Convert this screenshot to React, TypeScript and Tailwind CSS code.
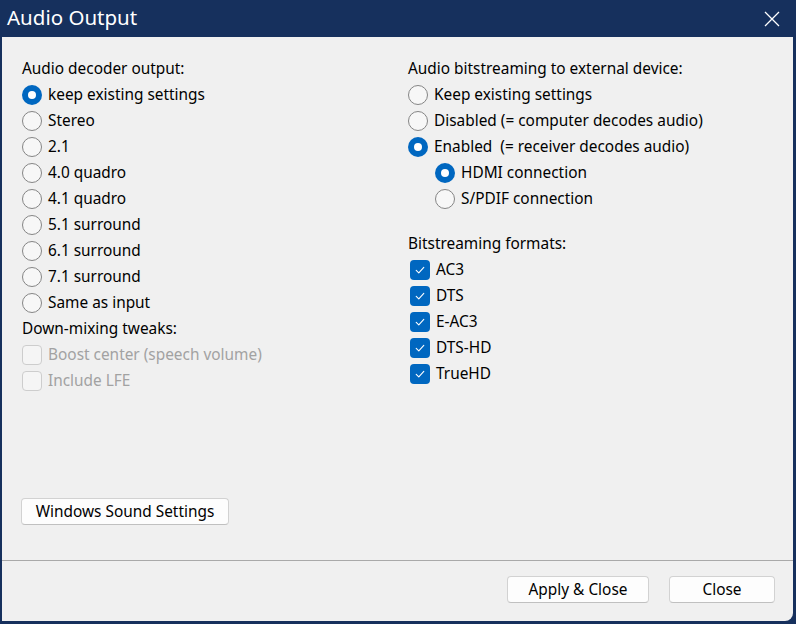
import React, { useState } from 'react';

const FONT = { fontFamily: '"Noto Sans", "Open Sans", Arial, sans-serif' };

const Radio: React.FC<{ checked: boolean; label: string; onClick: () => void }> = ({ checked, label, onClick }) => (
  <div className="flex h-[26px] items-center cursor-default" onClick={onClick}>
    {checked ? (
      <span className="flex h-[20px] w-[20px] items-center justify-center rounded-full bg-[#0067c0]">
        <span className="h-[8px] w-[8px] rounded-full bg-white" />
      </span>
    ) : (
      <span className="h-[20px] w-[20px] rounded-full border border-[#858585] bg-[#f7f7f7]" />
    )}
    <span className="ml-[6px] whitespace-pre pb-[1px] text-[15.4px] text-black">{label}</span>
  </div>
);

const Check: React.FC<{ checked: boolean; label: string; disabled?: boolean; onClick?: () => void }> = ({
  checked,
  label,
  disabled,
  onClick,
}) => (
  <div className="flex h-[26px] items-center cursor-default" onClick={disabled ? undefined : onClick}>
    {checked ? (
      <span className="flex h-[20px] w-[20px] items-center justify-center rounded-[4px] bg-[#0067c0]">
        <svg width="12" height="12" viewBox="0 0 12 12" fill="none">
          <path d="M2.2 6.3 L4.8 8.8 L9.8 3.4" stroke="white" strokeWidth="1.1" strokeLinecap="round" strokeLinejoin="round" />
        </svg>
      </span>
    ) : (
      <span
        className={
          disabled
            ? 'h-[20px] w-[20px] rounded-[4px] border border-[#cdcdcd] bg-[#f5f5f5]'
            : 'h-[20px] w-[20px] rounded-[4px] border border-[#858585] bg-[#f7f7f7]'
        }
      />
    )}
    <span
      className={
        disabled
          ? 'ml-[6px] pb-[1px] text-[15.4px] text-[#a2a2a2]'
          : 'ml-[6px] pb-[1px] text-[15.4px] text-black'
      }
    >
      {label}
    </span>
  </div>
);

const Heading: React.FC<{ label: string; className?: string }> = ({ label, className }) => (
  <div className={'flex h-[26px] items-center pb-[1px] text-[15.4px] text-black ' + (className || '')}>{label}</div>
);

const Button: React.FC<{ label: string; className?: string }> = ({ label, className }) => (
  <button
    className={
      'flex h-[27px] items-center justify-center rounded-[4px] border border-[#d2d2d2] border-b-[#c0c0c0] bg-[#fdfdfd] text-[15.4px] text-black ' +
      (className || '')
    }
  >
    {label}
  </button>
);

const channels = [
  'keep existing settings',
  'Stereo',
  '2.1',
  '4.0 quadro',
  '4.1 quadro',
  '5.1 surround',
  '6.1 surround',
  '7.1 surround',
  'Same as input',
];

const App: React.FC = () => {
  const [channel, setChannel] = useState(0);
  const [bitstream, setBitstream] = useState(2);
  const [conn, setConn] = useState(0);
  const [formats, setFormats] = useState<Record<string, boolean>>({
    AC3: true,
    DTS: true,
    'E-AC3': true,
    'DTS-HD': true,
    TrueHD: true,
  });

  return (
    <div className="flex h-[624px] w-[796px] flex-col bg-[#16305d]" style={FONT}>
      <div className="flex h-[37px] items-center justify-between pl-[7px] pr-[16px]">
        <span className="pb-[2px] text-[20.5px] text-white">Audio Output</span>
        <svg width="16" height="16" viewBox="0 0 16 16">
          <path d="M1 1 L15 15 M15 1 L1 15" stroke="white" strokeWidth="1.3" />
        </svg>
      </div>
      <div className="mb-[3px] ml-[2px] mr-[3px] flex flex-1 flex-col rounded-br-[8px] bg-[#f0f0f0]">
        <div className="flex flex-1 flex-col pb-[35px] pl-[20px] pt-[19px]">
          <div className="flex">
            <div className="w-[386px]">
              <Heading label="Audio decoder output:" />
              {channels.map((c, i) => (
                <Radio key={c} label={c} checked={channel === i} onClick={() => setChannel(i)} />
              ))}
              <Heading label="Down-mixing tweaks:" />
              <Check checked={false} disabled label="Boost center (speech volume)" />
              <Check checked={false} disabled label="Include LFE" />
            </div>
            <div>
              <Heading label="Audio bitstreaming to external device:" />
              <Radio label="Keep existing settings" checked={bitstream === 0} onClick={() => setBitstream(0)} />
              <Radio label="Disabled (= computer decodes audio)" checked={bitstream === 1} onClick={() => setBitstream(1)} />
              <Radio label="Enabled  (= receiver decodes audio)" checked={bitstream === 2} onClick={() => setBitstream(2)} />
              <div className="pl-[27px]">
                <Radio label="HDMI connection" checked={conn === 0} onClick={() => setConn(0)} />
                <Radio label="S/PDIF connection" checked={conn === 1} onClick={() => setConn(1)} />
              </div>
              <Heading label="Bitstreaming formats:" className="mt-[19px]" />
              <div className="pl-[2px]">
                {Object.keys(formats).map((f) => (
                  <Check
                    key={f}
                    label={f}
                    checked={formats[f]}
                    onClick={() => setFormats({ ...formats, [f]: !formats[f] })}
                  />
                ))}
              </div>
            </div>
          </div>
          <div className="-ml-[1px] mt-auto">
            <Button label="Windows Sound Settings" className="w-[208px]" />
          </div>
        </div>
        <div className="flex h-[61px] justify-end gap-[20px] border-t border-[#a9a9a9] pr-[18px] pt-[15px]">
          <Button label="Apply & Close" className="w-[142px]" />
          <Button label="Close" className="w-[106px]" />
        </div>
      </div>
    </div>
  );
};

export default App;
